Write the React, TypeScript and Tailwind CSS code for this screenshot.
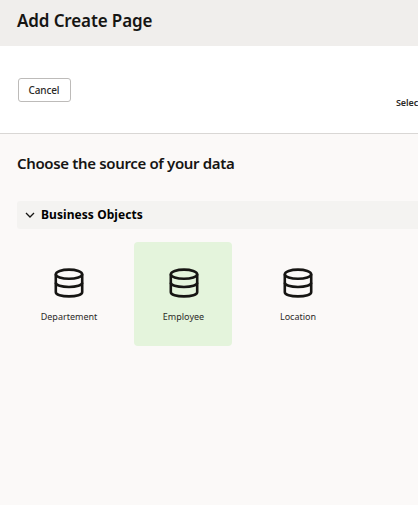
const sources = [
  { name: 'Departement', selected: false },
  { name: 'Employee', selected: true },
  { name: 'Location', selected: false },
];

function DatabaseIcon() {
  return (
    <svg className="h-[30px] w-[30px]" viewBox="0 0 30 30" fill="none" stroke="#161513" strokeWidth="2.6">
      <ellipse cx="15" cy="6.2" rx="13.2" ry="4.6" />
      <path d="M1.8 6.2v18c0 2.4 5.7 4.2 13.2 4.2s13.2-1.8 13.2-4.2v-18" />
      <path d="M1.8 14.8c0 2.4 5.7 4.2 13.2 4.2s13.2-1.8 13.2-4.2" />
    </svg>
  );
}

export default function App() {
  return (
    <div className="flex h-[505px] w-full flex-col overflow-hidden bg-[#fbf9f8] font-['Noto_Sans',sans-serif] text-[#161513]">
      <header className="h-[46px] shrink-0 bg-[#f0eeec] pt-[9px] pl-[17px]">
        <h1 className="text-[17px] leading-6 font-semibold tracking-[-0.12px] whitespace-nowrap">Add Create Page</h1>
      </header>
      <div className="flex h-[88px] shrink-0 items-start justify-between border-b border-[#d9d7d5] bg-white pl-[18px]">
        <button className="mt-8 flex h-[24px] w-[53px] items-center justify-center rounded-[3px] border border-[#bdbbb9] pt-px pr-px text-[10px] font-medium tracking-[-0.15px] text-[#2b2a28]">
          Cancel
        </button>
        <div className="mt-[49px] w-[22px] text-[9px] leading-4 font-semibold tracking-[-0.1px] whitespace-nowrap text-[#2b2a28]">Selec</div>
      </div>
      <main className="pl-[17px]">
        <h2 className="mt-[17px] text-[15px] leading-6 font-semibold tracking-[-0.35px] whitespace-nowrap">Choose the source of your data</h2>
        <section className="mt-[26px]">
          <div className="flex h-7 items-center rounded-l-[3px] bg-[#f4f3f1] pl-[8px]">
            <svg className="h-[10px] w-[10px]" viewBox="0 0 10 10" fill="none" stroke="#161513" strokeWidth="1.3">
              <path d="M1 3l4 4 4-4" />
            </svg>
            <h3 className="ml-[6px] text-[12px] font-bold tracking-[0.07px] whitespace-nowrap text-black">Business Objects</h3>
          </div>
          <div className="mt-[13px] flex gap-[16.5px] pl-[2.5px]">
            {sources.map((source) => (
              <div
                key={source.name}
                className={`flex h-[104px] w-[98px] flex-col items-center rounded-[4px] pt-[26px] pl-px ${source.selected ? 'bg-[#e4f4dc]' : ''}`}
              >
                <DatabaseIcon />
                <span className="mt-[11px] text-[9px] leading-4 whitespace-nowrap text-[#2b2a28]">{source.name}</span>
              </div>
            ))}
          </div>
        </section>
      </main>
    </div>
  );
}
